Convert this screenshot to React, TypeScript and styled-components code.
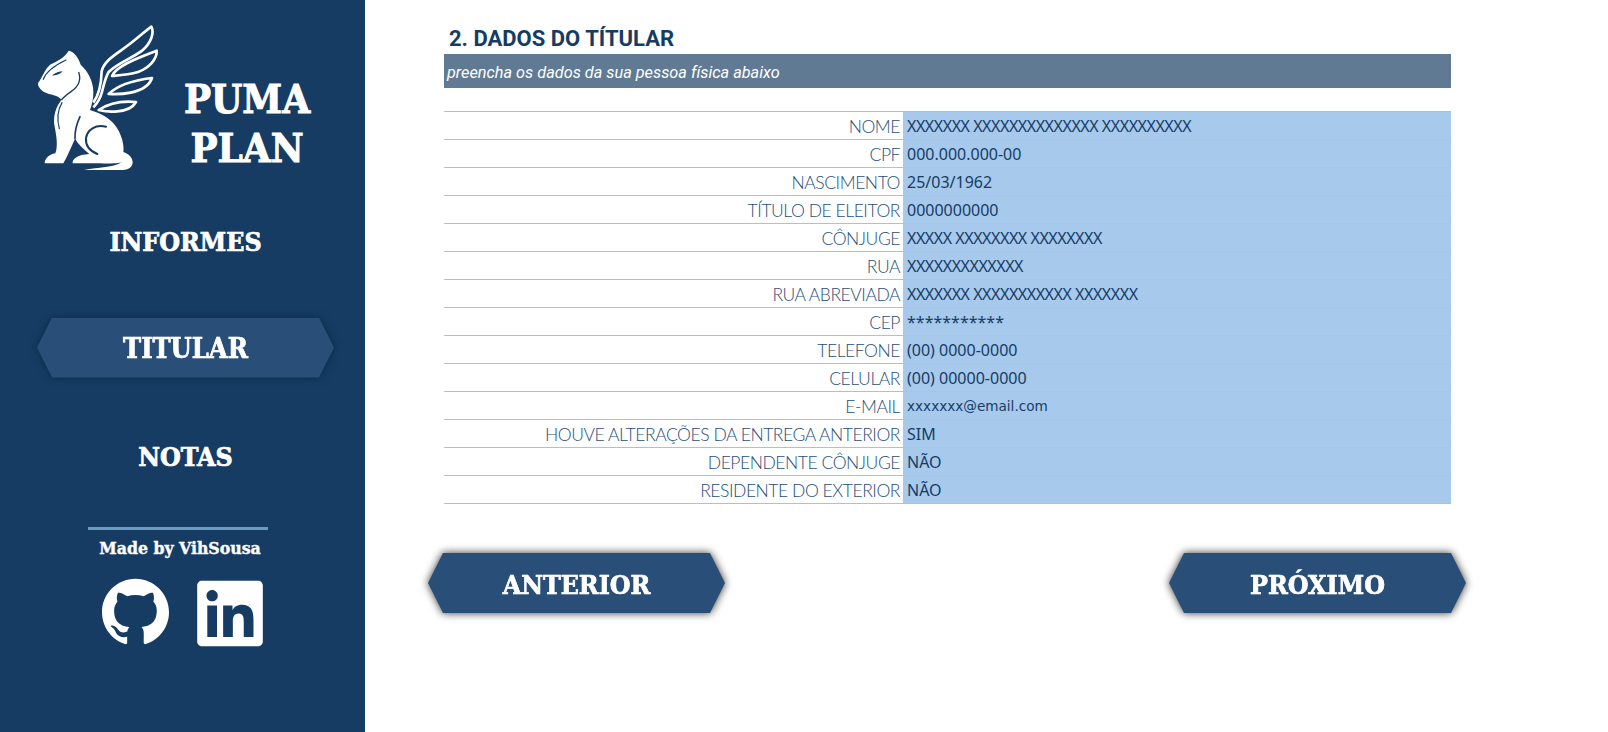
import React from 'react'
import styled, { createGlobalStyle } from 'styled-components'
import { FaLinkedin } from 'react-icons/fa'
import { SiGithub } from 'react-icons/si'

const GlobalStyle = createGlobalStyle`
  html, body {
    margin: 0;
    padding: 0;
    background: #fff;
  }
`

const slab = `"DejaVu Serif Condensed", "DejaVu Serif", "Liberation Serif", serif`

const Page = styled.div`
  display: flex;
  width: 1608px;
  height: 732px;
  overflow: hidden;
`

const Sidebar = styled.aside`
  width: 365px;
  flex: none;
  background: #163c64;
  display: flex;
  flex-direction: column;
  color: #fff;
  font-family: ${slab};
  font-stretch: condensed;
  font-weight: 700;
`

const Brand = styled.div`
  height: 210px;
  padding: 22px 0 0 35px;
  box-sizing: border-box;
  display: flex;
`

const BrandName = styled.div`
  margin: 52px 0 0 7px;
  width: 150px;
  text-align: center;
  font-size: 40px;
  line-height: 49px;
  -webkit-text-stroke: 0.9px #fff;
`

const Nav = styled.nav`
  display: flex;
  flex-direction: column;
  gap: 47.5px;
  padding-left: 37px;
`

const NavItem = styled.div`
  height: 60px;
  width: 297px;
  display: flex;
  align-items: center;
  justify-content: center;
  padding-top: 2px;
  box-sizing: border-box;
  font-size: 26.5px;
  -webkit-text-stroke: 0.7px #fff;
`

const Shadow = styled.div<{ $tone: string }>`
  filter: drop-shadow(0 0 4px ${p => p.$tone});
`

const Hex = styled.div`
  width: 297px;
  height: 60px;
  background: #294f79;
  clip-path: polygon(15px 0, 282px 0, 100% 50%, 282px 100%, 15px 100%, 0 50%);
  display: flex;
  align-items: center;
  justify-content: center;
  padding-top: 2px;
  box-sizing: border-box;
  color: #fff;
  font-family: ${slab};
  font-stretch: condensed;
  font-weight: 700;
  -webkit-text-stroke: 0.7px #fff;
`

const SideHex = styled(Hex)`
  font-size: 27px;
`

const Credits = styled.div`
  width: 180px;
  margin: 42px 0 0 88px;
  border-top: 3px solid #6a9cc0;
  text-align: center;
`

const CreditText = styled.div`
  font-size: 17.5px;
  line-height: 20px;
  padding: 8px 0 0 4px;
  white-space: nowrap;
  -webkit-text-stroke: 0.4px #fff;
`

const Socials = styled.div`
  display: flex;
  align-items: flex-start;
  margin: 20px 0 0 14px;
  line-height: 0;
  gap: 28px;
`

const GithubIcon = styled(SiGithub)`
  width: 67px;
  height: 67px;
`

const LinkedinIcon = styled(FaLinkedin)`
  width: 66px;
  height: 75px;
  margin-top: -2px;
`

const Main = styled.main`
  flex: 1;
  padding: 0 0 0 63px;
  font-family: Roboto, sans-serif;
`

const Form = styled.section`
  width: 1007px;
  margin-left: 16px;
`

const Title = styled.h1`
  margin: 0;
  padding: 26px 0 0 5px;
  height: 54px;
  box-sizing: border-box;
  font-size: 22px;
  line-height: 26px;
  font-weight: 700;
  color: #163c64;
`

const Subtitle = styled.div`
  height: 34px;
  background: #607a94;
  color: #fff;
  font-style: italic;
  font-size: 16.3px;
  line-height: 37px;
  padding-left: 3px;
  margin-bottom: 23px;
`

const Table = styled.div`
  border-top: 1px solid #bdbdbd;
`

const Row = styled.div`
  display: grid;
  grid-template-columns: 459px 1fr;
  height: 28px;
  box-sizing: border-box;
  border-bottom: 1px solid #bdbdbd;
`

const Label = styled.div`
  text-align: right;
  padding: 1px 3px 0 0;
  font-family: Lato, sans-serif;
  font-weight: 300;
  font-size: 17.5px;
  letter-spacing: -0.45px;
  line-height: 27px;
  color: #1f4e79;
`

type ValueKind = 'plain' | 'tight' | 'email'

const Value = styled.div<{ $kind: ValueKind }>`
  background: #a6c9ec;
  border-bottom: 1px solid #b3c3d3;
  height: 27px;
  padding-left: 4px;
  font-family: ${p => (p.$kind === 'email' ? '"DejaVu Sans"' : '"Noto Sans"')}, sans-serif;
  font-size: ${p => (p.$kind === 'email' ? '13.6px' : '16px')};
  letter-spacing: ${p => (p.$kind === 'tight' ? '-0.45px' : '0')};
  line-height: 28px;
  color: #163c64;
`

const LastValue = styled(Value)`
  border-bottom-color: #bdbdbd;
`

const Pager = styled.div`
  display: flex;
  justify-content: space-between;
  width: 1038px;
  margin-top: 49px;
`

const PagerHex = styled(Hex)`
  font-size: 26.5px;
`

const rows: [string, string, ValueKind][] = [
  ['NOME', 'XXXXXXX XXXXXXXXXXXXXX XXXXXXXXXX', 'tight'],
  ['CPF', '000.000.000-00', 'plain'],
  ['NASCIMENTO', '25/03/1962', 'plain'],
  ['TÍTULO DE ELEITOR', '0000000000', 'plain'],
  ['CÔNJUGE', 'XXXXX XXXXXXXX XXXXXXXX', 'tight'],
  ['RUA', 'XXXXXXXXXXXXX', 'tight'],
  ['RUA ABREVIADA', 'XXXXXXX XXXXXXXXXXX XXXXXXX', 'tight'],
  ['CEP', '***********', 'plain'],
  ['TELEFONE', '(00) 0000-0000', 'plain'],
  ['CELULAR', '(00) 00000-0000', 'plain'],
  ['E-MAIL', 'xxxxxxx@email.com', 'email'],
  ['HOUVE ALTERAÇÕES DA ENTREGA ANTERIOR', 'SIM', 'plain'],
  ['DEPENDENTE CÔNJUGE', 'NÃO', 'plain'],
  ['RESIDENTE DO EXTERIOR', 'NÃO', 'plain'],
]

const PumaLogo = () => (
  <svg width="130" height="150" viewBox="105 66 390 450" fill="none">
    {/* body */}
    <path
      fill="#fff"
      d="M206 152 C222 154 236 174 242 194 C264 214 280 244 280 276 C280 298 276 314 270 330 C304 340 338 358 356 392 C370 420 372 444 370 456 C386 462 398 472 398 488 C396 504 382 510 360 510 L252 510 C282 502 340 504 366 486 C352 492 320 490 218 490 C216 476 234 464 268 462 C250 446 234 432 225 416 C212 444 204 466 190 490 L134 490 C134 476 146 464 166 460 C174 440 170 410 164 380 C158 350 168 320 184 300 C176 284 150 286 132 276 C118 266 110 254 116 246 C126 234 134 208 150 194 C170 184 194 174 206 152 Z"
    />
    {/* face and contours */}
    <path stroke="#163c64" strokeWidth="3.5" strokeLinecap="round" d="M130 238 C138 216 160 198 198 180" />
    <path fill="#163c64" d="M156 226 C168 218 178 214 188 214 C180 222 170 227 156 226 Z" />
    <path stroke="#163c64" strokeWidth="4" d="M236 216 C244 240 238 258 214 274 C200 284 190 292 184 300" />
    <path stroke="#163c64" strokeWidth="3.5" strokeLinecap="round" d="M186 308 C172 332 170 356 178 386" />
    <path stroke="#163c64" strokeWidth="5" strokeLinecap="round" d="M240 350 C228 376 224 396 225 416" />
    <path stroke="#163c64" strokeWidth="6" strokeLinecap="round" d="M318 380 C286 372 262 390 258 414 C256 436 268 452 292 462" />
    {/* wing */}
    <path
      stroke="#fff"
      strokeWidth="8"
      strokeLinejoin="round"
      d="M280 308 C298 284 304 250 305 214 C312 180 352 162 392 130 C420 108 440 90 454 80 C464 100 452 130 426 152 C398 174 352 190 326 216 C316 232 312 252 306 276 C300 298 292 310 280 322"
    />
    <path
      stroke="#fff"
      strokeWidth="8"
      strokeLinejoin="round"
      d="M336 228 C350 196 420 172 470 152 C472 178 446 204 414 216 C386 224 358 226 336 228 Z"
    />
    <path
      stroke="#fff"
      strokeWidth="8"
      strokeLinejoin="round"
      d="M326 282 C356 252 408 240 456 234 C448 258 420 272 392 278 C368 283 344 283 326 282 Z"
    />
    <path
      stroke="#fff"
      strokeWidth="8"
      strokeLinejoin="round"
      d="M296 330 C326 310 368 302 408 306 C398 324 376 332 352 334 C332 336 312 334 296 330 Z"
    />
  </svg>
)

export default function App() {
  return (
    <Page>
      <GlobalStyle />
      <Sidebar>
        <Brand>
          <PumaLogo />
          <BrandName>
            PUMA
            <br />
            PLAN
          </BrandName>
        </Brand>
        <Nav>
          <NavItem>INFORMES</NavItem>
          <Shadow $tone="#0c2744">
            <SideHex>TITULAR</SideHex>
          </Shadow>
          <NavItem>NOTAS</NavItem>
        </Nav>
        <Credits>
          <CreditText>Made by VihSousa</CreditText>
          <Socials>
            <GithubIcon />
            <LinkedinIcon />
          </Socials>
        </Credits>
      </Sidebar>
      <Main>
        <Form>
          <Title>2. DADOS DO TÍTULAR</Title>
          <Subtitle>preencha os dados da sua pessoa física abaixo</Subtitle>
          <Table>
            {rows.map(([label, value, kind], i) => {
              const Cell = i === rows.length - 1 ? LastValue : Value
              return (
                <Row key={label}>
                  <Label>{label}</Label>
                  <Cell $kind={kind}>{value}</Cell>
                </Row>
              )
            })}
          </Table>
        </Form>
        <Pager>
          <Shadow $tone="#333">
            <PagerHex>ANTERIOR</PagerHex>
          </Shadow>
          <Shadow $tone="#333">
            <PagerHex>PRÓXIMO</PagerHex>
          </Shadow>
        </Pager>
      </Main>
    </Page>
  )
}
